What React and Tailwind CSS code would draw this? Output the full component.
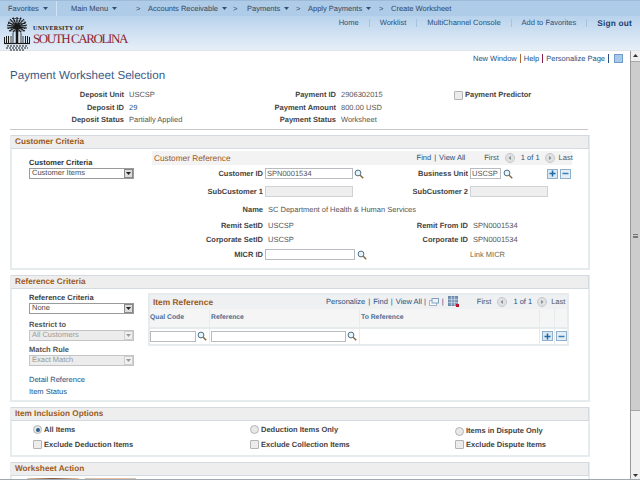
import React from 'react';

const font = { fontFamily: '"Liberation Sans", Arial, sans-serif' };

const Search = ({ className = '' }) => (
    <svg width="10" height="10" viewBox="0 0 10 10" className={`shrink-0 ${className}`}>
        <circle cx="4" cy="4" r="2.9" fill="#eaf3fa" stroke="#4c7085" strokeWidth="1" />
        <path d="M6.2 6.2 L9.2 9.2" stroke="#8a6a3a" strokeWidth="1.5" />
    </svg>
);

const PlusBox = () => (
    <div className="w-[11px] h-[10px] border border-[#8fb0cc] bg-[#dbe8f3] flex items-center justify-center">
        <svg width="7" height="7" viewBox="0 0 7 7"><path d="M3.5 0.5v6M0.5 3.5h6" stroke="#1c6aa8" strokeWidth="1.5" /></svg>
    </div>
);

const MinusBox = () => (
    <div className="w-[11px] h-[10px] border border-[#8fb0cc] bg-[#e6eef5] flex items-center justify-center">
        <svg width="7" height="7" viewBox="0 0 7 7"><path d="M0.5 3.5h6" stroke="#3a7fb5" strokeWidth="1.5" /></svg>
    </div>
);

const NavCircle = ({ dir }) => (
    <svg width="10" height="10" viewBox="0 0 10 10" className="shrink-0">
        <circle cx="5" cy="5" r="4.5" fill="#dfe1e3" stroke="#c4c8cc" />
        <path d={dir === 'left' ? 'M6 3 L3.5 5 L6 7 Z' : 'M4 3 L6.5 5 L4 7 Z'} fill="#8b8f93" />
    </svg>
);

const Dropdown = ({ value, disabled }) => (
    <div className={`w-[105px] h-[11px] border flex items-center justify-between ${disabled ? 'border-[#c4c4c4] bg-[#ececec] text-[#9a9a9a]' : 'border-[#9a9a9a] bg-white text-[#4a4a4a]'}`}>
        <span className="pl-[2px]">{value}</span>
        <div className={`w-[9px] h-[9px] flex items-center justify-center border ${disabled ? 'border-[#cfcfcf] bg-[#f0f0f0]' : 'border-[#888] bg-[#dcdcdc]'}`}>
            <svg width="5" height="3" viewBox="0 0 5 3"><path d="M0 0h5L2.5 3z" fill={disabled ? '#9a9a9a' : '#222'} /></svg>
        </div>
    </div>
);

const Field = ({ value = '', w, disabled }) => (
    <div style={{ width: w }} className={`h-[11px] border leading-[9px] pl-[1px] text-[#555] shrink-0 ${disabled ? 'border-[#cfd3d6] bg-[#eeeeee]' : 'border-[#b8bcc0] bg-white'}`}>{value}</div>
);

const Label = ({ children }) => <span className="font-bold text-[#444]">{children}</span>;
const Val = ({ children }) => <span className="text-[#555]">{children}</span>;

const Checkbox = () => <div className="w-[9px] h-[9px] border border-[#b4b4b4] bg-[#ececec] rounded-[1px] shrink-0" />;
const Radio = ({ on }) => (
    <div className="w-[9px] h-[9px] rounded-full border border-[#b4b4b4] bg-[#e8e8e8] flex items-center justify-center shrink-0">
        {on && <div className="w-[4px] h-[4px] rounded-full bg-[#2f5f8f]" />}
    </div>
);

const Section = ({ title, className = '', children }) => (
    <div className={`w-[580px] border-x-2 border-b-2 border-[#e6ebee] ${className}`}>
        <div className="h-[14px] -mx-[1px] bg-[#eeeeee] border-y border-r border-[#d4dadf] pl-[4px] flex items-center text-[8.2px] font-bold text-[#9c5a1c]">{title}</div>
        {children}
    </div>
);

const Palmetto = () => (
    <svg width="28" height="35" viewBox="0 0 28 35" className="shrink-0">
        <g stroke="#1a1a1a" fill="none">
            <path d="M14 11 L14 1M14 11 L10 1.5M14 11 L18 1.5M14 11 L7 3M14 11 L21 3M14 11 L5 6M14 11 L23 6M14 11 L4 9M14 11 L24 9M14 11 L4 12M14 11 L24 12M14 11 L6 15M14 11 L22 15M14 11 L10 16.5M14 11 L18 16.5" strokeWidth="1.1" />
            <path d="M9 2.5h10M6.5 5h15M5 7.5h18M4.5 10h19M5 12.5h18M7 15h14" strokeDasharray="1 0.6" strokeWidth="0.9" />
            <path d="M14 12V27" strokeWidth="2.5" />
            <path d="M10 17V27M18 17V27M8 20V27M20 20V27" strokeWidth="0.8" />
            <path d="M1.5 21v6M3.5 20v7M5.5 20v7M22.5 20v7M24.5 20v7M26.5 21v6" strokeWidth="1" />
            <path d="M1 27.5h26" strokeWidth="1.2" />
            <path d="M4 30h20M3 32h22M7 34h14" strokeDasharray="2 1" strokeWidth="1.2" />
        </g>
    </svg>
);

const navItems = ['Main Menu', 'Accounts Receivable', 'Payments', 'Apply Payments'];

const Crumb = ({ label, w }) => (
    <span style={{ width: w }} className="flex items-center gap-[4px] shrink-0">
        {label}
        <svg width="5" height="3" viewBox="0 0 5 3"><path d="M0 0h5L2.5 3z" fill="#33506f" /></svg>
    </span>
);

const Sep = () => <span className="w-px h-[8px] bg-[#a9c3dc]" />;

export default function App() {
    return (
        <div style={font} className="w-[640px] h-[480px] overflow-hidden bg-white relative flex flex-col text-[7.5px] leading-[10px] whitespace-nowrap [text-rendering:geometricPrecision]">
            {/* top nav */}
            <div className="h-[16px] shrink-0 bg-[#aecbe8] border-t border-[#9dbbd9] flex items-center text-[#33475f] pl-[8px]">
                <Crumb label="Favorites" w={48} />
                <span className="w-px h-[16px] bg-[#d4e3f1] mr-[14px]" />
                <Crumb label={navItems[0]} w={65} />
                <span className="w-[12px] shrink-0">&gt;</span>
                <Crumb label={navItems[1]} w={85} />
                <span className="w-[14px] shrink-0">&gt;</span>
                <Crumb label={navItems[2]} w={49} />
                <span className="w-[12px] shrink-0">&gt;</span>
                <Crumb label={navItems[3]} w={71} />
                <span className="w-[12px] shrink-0">&gt;</span>
                <span>Create Worksheet</span>
            </div>

            {/* brand row */}
            <div className="h-[35px] shrink-0 bg-gradient-to-b from-[#b9d3ec] to-[#e6eff8] border-b border-[#dfe4e8] flex justify-between pl-[3px] pr-[8px]">
                <div className="flex items-center">
                    <Palmetto />
                    <div className="ml-[2px] pt-[4px] flex flex-col" style={{ fontFamily: '"Liberation Serif", "Times New Roman", serif' }}>
                        <span className="text-[6px] leading-[7px] font-bold tracking-[0.3px] text-[#222]">UNIVERSITY OF</span>
                        <span className="text-[13px] leading-[12px] text-[#8f1f2f] tracking-[-1.42px]">SOUTH CAROLINA</span>
                    </div>
                </div>
                <div className="flex items-center gap-[10px] h-[12px] mt-[1px] text-[#26507f]">
                    <span>Home</span>
                    <Sep />
                    <span>Worklist</span>
                    <Sep />
                    <span>MultiChannel Console</span>
                    <Sep />
                    <span>Add to Favorites</span>
                    <Sep />
                    <span className="text-[8.3px] font-bold text-[#1d3f6e] tracking-[0.2px]">Sign out</span>
                </div>
            </div>

            <div className="flex-1 flex min-h-0">
                <div className="w-[630px] shrink-0 relative overflow-hidden">
                    {/* page links */}
                    <div className="h-[13px] mt-[1px] flex items-center justify-end gap-[3px] pr-[7px] text-[#26507f]">
                        <span>New Window</span>
                        <span className="w-px h-[9px] bg-[#b06a2c]" />
                        <span>Help</span>
                        <span className="w-px h-[9px] bg-[#8f1f4f]" />
                        <span>Personalize Page</span>
                        <span className="w-px h-[9px] bg-[#26507f]" />
                        <div className="ml-[2px] w-[9px] h-[9px] bg-[#a9c9e8] border border-[#6f9cc8]" />
                    </div>

                    <h1 className="mt-[4px] ml-[10px] text-[11.6px] leading-[14px] text-[#3a5a85]">Payment Worksheet Selection</h1>

                    {/* summary */}
                    <div className="mt-[6px] ml-[10px] w-[578px] pb-[2px] border-b border-[#c8c8c8] grid grid-cols-[114px_5px_93px_114px_5px_113px_1fr] auto-rows-[12.5px] items-center">
                        <div className="text-right"><Label>Deposit Unit</Label></div><div /><Val>USCSP</Val>
                        <div className="text-right"><Label>Payment ID</Label></div><div /><Val>2906302015</Val>
                        <div className="flex items-center gap-[2px]"><Checkbox /><Label>Payment Predictor</Label></div>
                        <div className="text-right"><Label>Deposit ID</Label></div><div /><span className="text-[#26507f]">29</span>
                        <div className="text-right"><Label>Payment Amount</Label></div><div /><Val>800.00 USD</Val>
                        <div />
                        <div className="text-right"><Label>Deposit Status</Label></div><div /><Val>Partially Applied</Val>
                        <div className="text-right"><Label>Payment Status</Label></div><div /><Val>Worksheet</Val>
                        <div />
                    </div>

                    {/* Customer Criteria */}
                    <Section title="Customer Criteria" className="mt-[5px] ml-[10px] h-[135px]">
                        <div className="flex pt-[2px]">
                            <div className="w-[140px] pl-[17px] pt-[7px] shrink-0">
                                <div className="font-bold text-[#333]">Customer Criteria</div>
                                <Dropdown value="Customer Items" />
                            </div>
                            <div className="w-[420px] shrink-0">
                                <div className="h-[14px] bg-[#f3f3f3] flex items-center pl-[2px] pr-[2px] text-[#26507f]">
                                    <span className="text-[8.3px] text-[#9c5a1c]">Customer Reference</span>
                                    <span className="ml-[186px]">Find</span>
                                    <span className="mx-[3px]">|</span>
                                    <span>View All</span>
                                    <span className="ml-[19px] text-[#555]">First</span>
                                    <span className="mx-[6px]"><NavCircle dir="left" /></span>
                                    <span>1 of 1</span>
                                    <span className="mx-[5px]"><NavCircle dir="right" /></span>
                                    <span className="-ml-[1px] text-[#555]">Last</span>
                                </div>
                                <div className="grid grid-cols-[111px_117px_88px_1fr]">
                                    {/* row 1 */}
                                    <div className="h-[18px] flex items-center justify-end"><Label>Customer ID</Label></div>
                                    <div className="h-[18px] flex items-center pl-[2px] gap-[1px]"><Field value="SPN0001534" w={88} /><Search /></div>
                                    <div className="h-[18px] flex items-center justify-end"><Label>Business Unit</Label></div>
                                    <div className="h-[18px] flex items-center pl-[2px] gap-[2px]">
                                        <Field value="USCSP" w={31} /><Search />
                                        <div className="ml-[32px] flex gap-[2px]"><PlusBox /><MinusBox /></div>
                                    </div>
                                    {/* row 2 */}
                                    <div className="h-[18px] flex items-center justify-end"><Label>SubCustomer 1</Label></div>
                                    <div className="h-[18px] flex items-center pl-[2px]"><Field w={88} disabled /></div>
                                    <div className="h-[18px] flex items-center justify-end"><Label>SubCustomer 2</Label></div>
                                    <div className="h-[18px] flex items-center pl-[2px]"><Field w={78} disabled /></div>
                                    {/* row 3 */}
                                    <div className="h-[18px] flex items-center justify-end"><Label>Name</Label></div>
                                    <div className="h-[18px] flex items-center pl-[5px] col-span-3"><Val>SC Department of Health &amp; Human Services</Val></div>
                                    {/* row 4 */}
                                    <div className="h-[14px] flex items-center justify-end"><Label>Remit SetID</Label></div>
                                    <div className="h-[14px] flex items-center pl-[5px]"><Val>USCSP</Val></div>
                                    <div className="h-[14px] flex items-center justify-end"><Label>Remit From ID</Label></div>
                                    <div className="h-[14px] flex items-center pl-[5px]"><Val>SPN0001534</Val></div>
                                    {/* row 5 */}
                                    <div className="h-[15px] flex items-center justify-end"><Label>Corporate SetID</Label></div>
                                    <div className="h-[15px] flex items-center pl-[5px]"><Val>USCSP</Val></div>
                                    <div className="h-[15px] flex items-center justify-end"><Label>Corporate ID</Label></div>
                                    <div className="h-[15px] flex items-center pl-[5px]"><Val>SPN0001534</Val></div>
                                    {/* row 6 */}
                                    <div className="h-[14px] flex items-center justify-end"><Label>MICR ID</Label></div>
                                    <div className="h-[14px] flex items-center pl-[2px] gap-[2px]"><Field w={90} /><Search /></div>
                                    <div />
                                    <div className="h-[14px] flex items-center pl-[2px]"><span className="text-[#6b6b4f]">Link MICR</span></div>
                                </div>
                            </div>
                        </div>
                    </Section>

                    {/* Reference Criteria */}
                    <Section title="Reference Criteria" className="mt-[5px] ml-[10px] h-[127.5px]">
                        <div className="flex pt-[4px]">
                            <div className="w-[136px] pl-[17px] shrink-0">
                                <div className="font-bold text-[#3f3f3f]">Reference Criteria</div>
                                <Dropdown value="None" />
                                <div className="mt-[6px] font-bold text-[#555]">Restrict to</div>
                                <Dropdown value="All Customers" disabled />
                                <div className="mt-[4px] font-bold text-[#555]">Match Rule</div>
                                <Dropdown value="Exact Match" disabled />
                                <div className="mt-[8px] leading-[12.5px] text-[#26507f]">
                                    <div>Detail Reference</div>
                                    <div>Item Status</div>
                                </div>
                            </div>
                            <div className="w-[421px] h-[53px] shrink-0 border-2 border-[#e6ebee]">
                                <div className="h-[14px] bg-[#eef0f2] flex items-center pl-[3px] pr-[4px] text-[#26507f]">
                                    <span className="text-[8.4px] font-bold text-[#9c5a1c]">Item Reference</span>
                                    <span className="ml-[113px]">Personalize</span>
                                    <span className="mx-[3px]">|</span>
                                    <span>Find</span>
                                    <span className="mx-[3px]">|</span>
                                    <span>View All</span>
                                    <span className="mx-[2px]">|</span>
                                    <svg width="10" height="8" viewBox="0 0 10 8" className="mx-[1px] shrink-0"><rect x="0.5" y="2.5" width="7" height="5" fill="#fff" stroke="#9fb6cc" /><rect x="3" y="0.5" width="6.5" height="4.5" fill="#eef4f9" stroke="#7fa0c0" /></svg>
                                    <span className="mx-[2px]">|</span>
                                    <svg width="11" height="11" viewBox="0 0 11 11" className="ml-[2px] shrink-0"><rect x="0.5" y="0.5" width="9" height="9" fill="#7f9abb" stroke="#6a88a8" /><path d="M0 3.5h10M0 6.5h10M3.5 0v10M6.5 0v10" stroke="#c9d6e4" strokeWidth="0.7" /><rect x="8" y="8" width="3" height="3" fill="#c01030" /></svg>
                                    <span className="ml-[18px] text-[#555]">First</span>
                                    <span className="mx-[6px]"><NavCircle dir="left" /></span>
                                    <span>1 of 1</span>
                                    <span className="mx-[5px]"><NavCircle dir="right" /></span>
                                    <span className="-ml-[1px] text-[#555]">Last</span>
                                </div>
                                <div className="h-[20px] bg-[#f5f5f5] border-b-2 border-[#e6ebee] grid grid-cols-[60px_150px_180px_15px_1fr] text-[6.8px] font-bold text-[#4a6f96]">
                                    <div className="flex items-center border-r border-[#e6ebee]">Qual Code</div>
                                    <div className="flex items-center pl-[1px] border-r border-[#e6ebee]">Reference</div>
                                    <div className="flex items-center pl-[1px] border-r border-[#e6ebee]">To Reference</div>
                                    <div className="border-r border-[#e6ebee]" />
                                    <div />
                                </div>
                                <div className="h-[15px] grid grid-cols-[60px_150px_180px_15px_1fr]">
                                    <div className="flex items-center gap-[1px] border-r border-[#e6ebee]"><Field w={46} /><Search /></div>
                                    <div className="flex items-center pl-[1px] gap-[1px] border-r border-[#e6ebee]"><Field w={135} /><Search /></div>
                                    <div className="border-r border-[#e6ebee]" />
                                    <div className="flex items-center justify-center border-r border-[#e6ebee]"><PlusBox /></div>
                                    <div className="flex items-center justify-center"><MinusBox /></div>
                                </div>
                            </div>
                        </div>
                    </Section>

                    {/* Item Inclusion Options */}
                    <Section title="Item Inclusion Options" className="mt-[5px] ml-[10px] h-[50px]">
                        <div className="grid grid-cols-[217px_205px_1fr] pl-[21px] pt-[1px] auto-rows-[15px] items-center">
                            <div className="flex items-center gap-[2px]"><Radio on /><Label>All Items</Label></div>
                            <div className="flex items-center gap-[2px]"><Radio /><Label>Deduction Items Only</Label></div>
                            <div className="flex items-center gap-[2px] pt-[3px]"><Radio /><Label>Items in Dispute Only</Label></div>
                            <div className="flex items-center gap-[2px]"><Checkbox /><Label>Exclude Deduction Items</Label></div>
                            <div className="flex items-center gap-[2px]"><Checkbox /><Label>Exclude Collection Items</Label></div>
                            <div className="flex items-center gap-[2px]"><Checkbox /><Label>Exclude Dispute Items</Label></div>
                        </div>
                    </Section>

                    {/* Worksheet Action */}
                    <Section title="Worksheet Action" className="mt-[5px] ml-[10px]">
                        <div className="flex gap-[6px] pl-[15px] pt-[2px]">
                            <div className="w-[52px] h-[4px] bg-gradient-to-r from-[#e8c8a8] via-[#7a5a48] to-[#e8c8a8]" />
                            <div className="w-[51px] h-[4px] bg-[#e0c0a8]" />
                        </div>
                    </Section>
                </div>

                {/* scrollbar */}
                <div className="w-[10px] shrink-0 flex flex-col bg-[#f0f0f0] border-l border-[#9a9a9a]">
                    <div className="h-[9px] flex items-center justify-center bg-[#f0f0f0]">
                        <svg width="5" height="3" viewBox="0 0 5 3"><path d="M0 3h5L2.5 0z" fill="#333" /></svg>
                    </div>
                    <div className="h-[350px] mt-[1px] bg-[#cdcdcd] border-y border-[#a8a8a8] flex items-center justify-center">
                        <div className="w-[5px] h-[4px] border-y border-[#777] flex items-center"><div className="w-full h-px bg-[#777]" /></div>
                    </div>
                    <div className="flex-1" />
                    <div className="h-[9px] flex items-center justify-center">
                        <svg width="5" height="3" viewBox="0 0 5 3"><path d="M0 0h5L2.5 3z" fill="#333" /></svg>
                    </div>
                </div>
            </div>
            <div className="absolute left-0 right-0 bottom-0 h-px bg-[#a0a8b0]" />
        </div>
    );
}
